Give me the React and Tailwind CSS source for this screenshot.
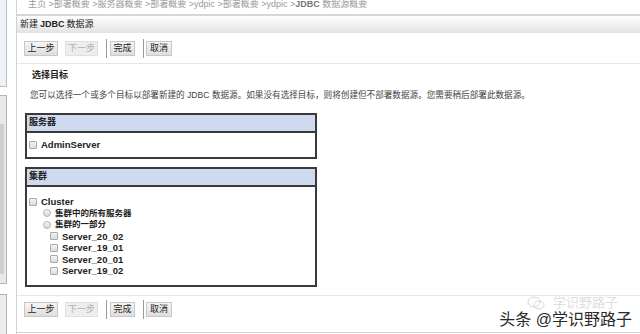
import React from "react";

const FONT = "[font-family:'Liberation_Sans','Noto_Sans_CJK_SC',sans-serif]";

const servers = ["Server_20_02", "Server_19_01", "Server_20_01", "Server_19_02"];

const Checkbox = () => (
  <span className="inline-block h-[8px] w-[8px] shrink-0 rounded-[1px] border border-[#a9a9a9] bg-gradient-to-b from-[#f4f4f4] to-[#dcdcdc]" />
);

const Radio = () => (
  <span className="inline-block h-[8px] w-[8px] shrink-0 rounded-full border border-[#b5b5b5] bg-gradient-to-b from-[#f6f6f6] to-[#d8d8d8]" />
);

const Btn = ({ children, disabled, w }) => (
  <span
    className={`flex h-[15px] items-center justify-center border text-[9px] leading-none whitespace-nowrap ${w} ${
      disabled
        ? "border-[#e0e0e0] bg-[#eeeeee] text-[#b0b0b0]"
        : "border-[#c8c8c8] bg-gradient-to-b from-[#f6f6f6] to-[#dedede] text-[#222]"
    }`}
  >
    {children}
  </span>
);

const ButtonRow = () => (
  <div className="flex h-[15px] items-center">
    <div className="ml-[7px]">
      <Btn w="w-[34px]">上一步</Btn>
    </div>
    <div className="ml-[7px]">
      <Btn disabled w="w-[33px]">下一步</Btn>
    </div>
    <span className="ml-[8px] h-[19px] w-[1px] bg-[#9a9a9a]" />
    <div className="ml-[3px]">
      <Btn w="w-[25px]">完成</Btn>
    </div>
    <span className="ml-[8px] h-[19px] w-[1px] bg-[#9a9a9a]" />
    <div className="ml-[2px]">
      <Btn w="w-[26px]">取消</Btn>
    </div>
  </div>
);

const Box = ({ title, children, bodyClass }) => (
  <div className="ml-[8px] w-[292px] border-2 border-[#3a3a3a]">
    <div className="flex h-[18px] items-center border-b-2 border-[#3a3a3a] bg-[#cfdaee] pl-[2px] text-[9px] font-bold text-[#222]">
      {title}
    </div>
    <div className={bodyClass}>{children}</div>
  </div>
);

export default function App() {
  return (
    <div className={`relative flex h-[334px] w-[640px] overflow-hidden bg-white ${FONT}`}>
      {/* left navigation remnants */}
      <div className="flex w-[16px] shrink-0 flex-col bg-white">
        <div className="h-[88px] w-[7px] border-r border-b border-[#b8bec6] bg-[#eef2f7]" />
        <div className="mt-[8px] flex h-[190px] w-[7px] border-r border-y border-[#b4b4b4] bg-[#e9e9e9]">
          <div className="mt-[28px] h-[150px] w-[4px] bg-[#cfcfcf]" />
        </div>
        <div className="mt-[10px] h-[40px] w-[7px] border-r border-t border-[#b4b4b4] bg-[#ececec]" />
      </div>

      {/* main panel */}
      <div className="flex flex-1 flex-col border-l border-[#d2d2d2]">
        <div className="h-[14px] overflow-hidden">
          <div className="-mt-[2px] pl-[11px] text-[9px] leading-[12px] whitespace-nowrap text-[#9a9a9a]">
            主页 &gt;部署概要 &gt;服务器概要 &gt;部署概要 &gt;ydpic &gt;部署概要 &gt;ydpic &gt;
            <span className="font-bold text-[#777]">JDBC</span> 数据源概要
          </div>
        </div>
        <div className="h-[2px] bg-[#d6d6d6]" />
        <div className="flex h-[17px] items-center bg-gradient-to-b from-[#ffffff] to-[#e3e3e3] pl-[3px] text-[9px] text-[#222]">
          新建 <span className="mx-[2px] font-bold">JDBC</span> 数据源
        </div>

        <div className="mt-[8px]">
          <ButtonRow />
        </div>
        <div className="mt-[7px] h-[1px] bg-[#e6e6e6]" />

        <div className="mt-[6px] pl-[15px] text-[9px] font-bold leading-[10px] text-[#222]">选择目标</div>
        <div className="mt-[10px] pl-[13px] text-[8.6px] leading-[10px] whitespace-nowrap text-[#444]">
          您可以选择一个或多个目标以部署新建的 JDBC 数据源。如果没有选择目标，则将创建但不部署数据源。您需要稍后部署此数据源。
        </div>

        <div className="mt-[13px]">
          <Box title="服务器" bodyClass="flex h-[24px] items-center pl-[2px]">
            <Checkbox />
            <span className="ml-[4px] text-[9.5px] font-bold text-[#222]">AdminServer</span>
          </Box>
        </div>

        <div className="mt-[8px]">
          <Box title="集群" bodyClass="flex h-[98px] flex-col pt-[9px] pl-[2px] text-[9.5px] font-bold leading-[11.5px] text-[#222]">
            <div className="flex items-center">
              <Checkbox />
              <span className="ml-[4px]">Cluster</span>
            </div>
            <div className="ml-[14px] flex items-center text-[8.5px]">
              <Radio />
              <span className="ml-[4px]">集群中的所有服务器</span>
            </div>
            <div className="ml-[14px] flex items-center text-[8.5px]">
              <Radio />
              <span className="ml-[4px]">集群的一部分</span>
            </div>
            {servers.map((s) => (
              <div key={s} className="ml-[21px] flex items-center">
                <Checkbox />
                <span className="ml-[4px]">{s}</span>
              </div>
            ))}
          </Box>
        </div>

        <div className="mt-[8px] h-[1px] bg-[#e6e6e6]" />
        <div className="mt-[6px]">
          <ButtonRow />
        </div>
        <div className="mt-auto mb-[1px] h-[1px] bg-[#d0d0d0]" />
      </div>

      {/* watermark */}
      <div className="absolute right-[8px] bottom-[5px] flex flex-col items-end">
        <div className="mr-[14px] flex items-center text-[13px] leading-[14px] text-[#dedede]">
          <svg width="18" height="14" viewBox="0 0 18 14" className="mr-[8px]">
            <ellipse cx="7" cy="6" rx="6" ry="5" fill="none" stroke="#d8d8d8" strokeWidth="1" />
            <ellipse cx="12" cy="9" rx="5" ry="4" fill="none" stroke="#d8d8d8" strokeWidth="1" />
          </svg>
          学识野路子
        </div>
        <div className="text-[16px] leading-[19px] text-[#2a2a2a] [text-shadow:0_0_2px_#fff,0_0_2px_#fff,0_0_3px_#fff]">
          头条 @学识野路子
        </div>
      </div>
    </div>
  );
}
